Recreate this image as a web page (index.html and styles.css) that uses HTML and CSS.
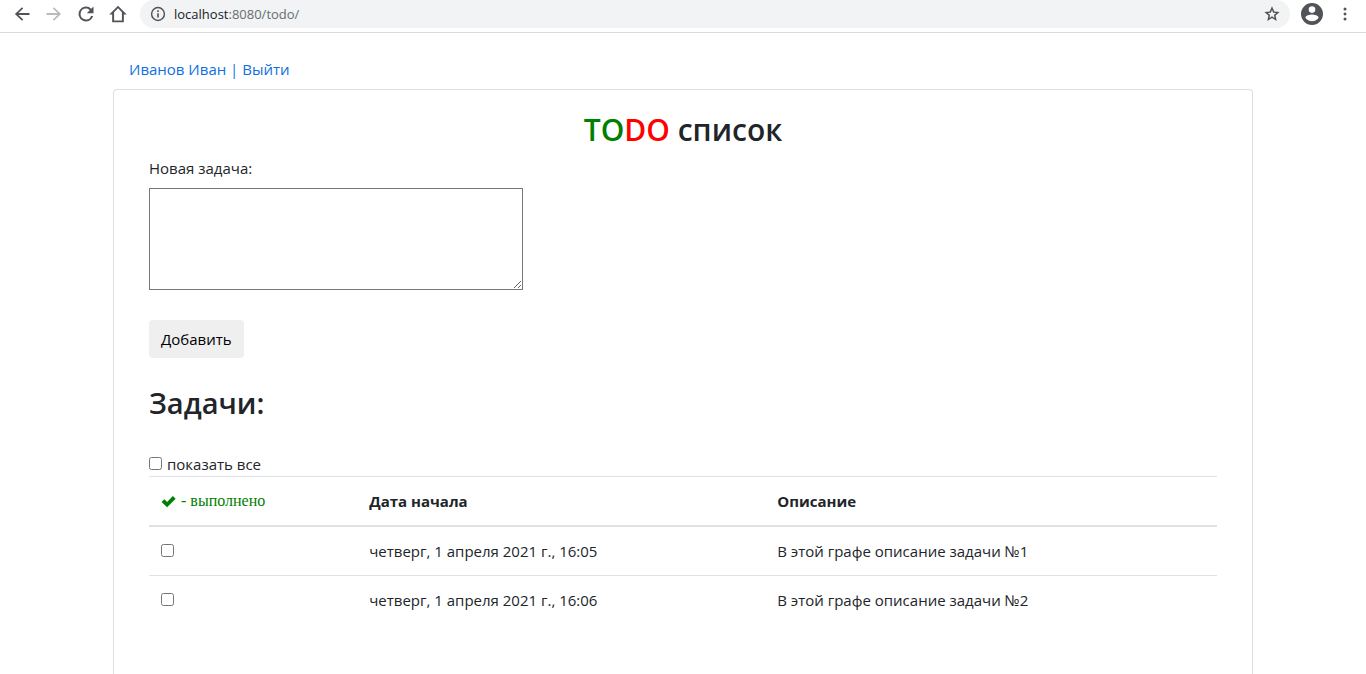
FILE: index.html
```html
<!DOCTYPE html>
<html lang="ru">
<head>
<meta charset="utf-8">
<title>TODO список</title>
<link rel="stylesheet" href="styles.css">
</head>
<body>
<header class="browser">
  <button class="tool" aria-label="Назад"><svg viewBox="0 0 24 24"><path d="M21 10.800H7.800l5.600-5.400L12 3.800 3.500 12l8.500 8.200 1.400-1.600-5.600-5.400H21z"/></svg></button>
  <button class="tool tool-off" aria-label="Вперёд"><svg viewBox="0 0 24 24"><path d="M3 10.800h13.200l-5.600-5.400L12 3.800l8.500 8.200-8.500 8.200-1.400-1.600 5.600-5.400H3z"/></svg></button>
  <button class="tool" aria-label="Обновить"><svg viewBox="0 0 24 24"><path d="M18.300 5.700A8.900 8.900 0 1 0 20.600 14.300h-2.500A6.500 6.500 0 1 1 12 5.500c1.800 0 3.400.7 4.500 1.900L13 11h8V3z"/></svg></button>
  <button class="tool" aria-label="Домой"><svg viewBox="0 0 24 24"><path d="M12 2 1.500 12.500H5V22h14v-9.500h3.500zM12 5.200l4.700 4.800v9.700H7.300V10z"/></svg></button>
  <div class="address">
    <svg class="info" viewBox="0 0 24 24"><path d="M10.800 6.500h2.400v2.400h-2.400zm0 4.300h2.400v6.500h-2.400zM12 1.300a10.700 10.700 0 1 0 0 21.400 10.700 10.700 0 0 0 0-21.400zm0 19.200a8.500 8.500 0 1 1 0-17 8.500 8.500 0 0 1 0 17z"/></svg>
    <span class="url"><span class="host">localhost</span>:8080/todo/</span>
    <button class="tool star" aria-label="В закладки"><svg viewBox="1 1 22 22"><path d="m22.500 9.200-7.400-.8L12 1.500 8.900 8.400l-7.400.8 5.600 4.900L5.500 21.500 12 17.600l6.500 3.900-1.600-7.400zM12 15.200l-3.500 2.200.9-4.100-3.100-2.700 4.100-.4L12 6.400l1.600 3.800 4.100.4-3.100 2.700.9 4.100z"/></svg></button>
  </div>
  <button class="tool profile" aria-label="Профиль"><svg viewBox="0 0 24 24"><path d="M12 1a11 11 0 1 0 0 22 11 11 0 0 0 0-22zm0 3.300a3.300 3.300 0 1 1 0 6.600 3.300 3.300 0 0 1 0-6.600zm0 14.900c-2.800 0-5.200-1.400-6.600-3.400 0-2.200 4.400-3.300 6.600-3.300s6.600 1.100 6.600 3.300c-1.400 2-3.800 3.400-6.600 3.400z"/></svg></button>
  <button class="tool" aria-label="Меню"><svg viewBox="0 0 24 24"><circle cx="12" cy="6" r="1.800"/><circle cx="12" cy="12" r="1.800"/><circle cx="12" cy="18" r="1.800"/></svg></button>
</header>
<main class="container">
  <nav class="user"><a href="#">Иванов Иван | Выйти</a></nav>
  <section class="card">
    <h1 class="title"><span class="to">TO</span><span class="do">DO</span> список</h1>
    <form class="form">
      <label class="label" for="task">Новая задача:</label>
      <textarea class="text" id="task"></textarea>
      <button class="add" type="button">Добавить</button>
    </form>
    <h2 class="heading">Задачи:</h2>
    <div class="filter"><input class="check" type="checkbox" id="all"><label for="all">показать все</label></div>
    <table class="tasks">
      <colgroup><col class="col-done"><col class="col-date"><col></colgroup>
      <thead>
        <tr>
          <th><span class="done"><svg class="tick" viewBox="0 0 16 14"><path d="M.5 7.500 3.500 4.500 6.500 7.500 12.700 1 15.700 4 6.500 13.300z"/></svg>- выполнено</span></th>
          <th>Дата начала</th>
          <th>Описание</th>
        </tr>
      </thead>
      <tbody>
        <tr><td><input class="check" type="checkbox" aria-label="Задача №1 выполнена"></td><td>четверг, 1 апреля 2021 г., 16:05</td><td>В этой графе описание задачи №1</td></tr>
        <tr><td><input class="check" type="checkbox" aria-label="Задача №2 выполнена"></td><td>четверг, 1 апреля 2021 г., 16:06</td><td>В этой графе описание задачи №2</td></tr>
      </tbody>
    </table>
  </section>
</main>
</body>
</html>
```

FILE: styles.css
```css
* { box-sizing: border-box; }
body {
  display: flex;
  flex-direction: column;
  min-height: 100vh;
  margin: 0;
  background: #fff;
  color: #212529;
  font: 15px/24px "Open Sans", "Noto Sans", sans-serif;
}
.browser {
  display: flex;
  align-items: center;
  gap: 12px;
  height: 33px;
  padding: 0 11px 4px 12px;
  border-bottom: 1px solid #d9dbdd;
}
.tool {
  flex: none;
  width: 20px;
  height: 20px;
  padding: 0;
  border: 0;
  background: none;
  color: #505357;
}
.tool svg, .info { display: block; width: 100%; fill: currentColor; }
.tool-off { color: #b9bbbd; }
.address {
  display: flex;
  flex: 1;
  align-items: center;
  gap: 8px;
  height: 28px;
  padding: 0 10px;
  border-radius: 14px;
  background: #f1f3f4;
}
.address .info { flex: none; width: 16px; color: #505357; }
.url { flex: 1; color: #686c70; font-size: 13px; }
.host { color: #202124; }
.star { width: 16px; height: 16px; }
.profile { width: 24px; height: 24px; margin: 0 -1px 0 -2px; }
.container {
  display: flex;
  flex: 1;
  flex-direction: column;
  width: 100%;
  max-width: 1140px;
  margin: 0 auto;
  padding-top: 24px;
}
.user { padding: 0 16px; margin-bottom: 8px; }
.user a { color: #0f6fde; text-decoration: none; }
.card {
  flex: 1;
  padding: 21px 35px 0;
  border: 1px solid #dfdfdf;
  border-bottom: 0;
  border-radius: 4px 4px 0 0;
}
.title, .heading { margin: 0; font-weight: 600; line-height: 38px; }
.title { margin-bottom: 7px; font-size: 30px; text-align: center; }
.to { color: #008000; }
.do { color: #f00; }
.form { display: flex; flex-direction: column; align-items: flex-start; }
.label { margin-bottom: 8px; }
.text {
  width: 35%;
  height: 102px;
  border: 1px solid #767676;
  border-radius: 0;
  background: #fff;
  font: inherit;
}
.add {
  height: 38px;
  margin: 30px 0 26px;
  padding: 0 12px;
  border: 0;
  border-radius: 4px;
  background: #efefef;
  color: #000;
  font: inherit;
}
.heading { margin-bottom: 30px; font-size: 29px; }
.filter { display: flex; align-items: center; gap: 5px; }
.check { display: block; width: 13px; height: 13px; margin: 0 0 2px; }
.tasks { width: 100%; border-collapse: collapse; table-layout: fixed; }
.col-done { width: 19.5%; }
.col-date { width: 38.2%; }
.tasks th, .tasks td { padding: 12px; border-top: 1px solid #dee2e6; text-align: left; }
.tasks th { border-bottom: 2px solid #dee2e6; font-weight: 700; }
.done {
  display: flex;
  align-items: center;
  gap: 5px;
  color: #008000;
  font: 16px/24px "Liberation Serif", serif;
}
.tick { width: 15px; height: 13px; fill: currentColor; }
```
